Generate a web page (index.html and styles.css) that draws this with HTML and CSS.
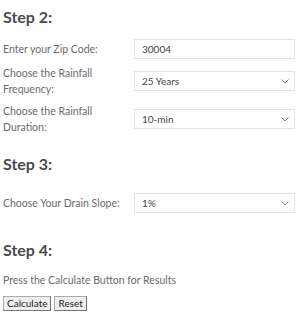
FILE: index.html
```html
<!DOCTYPE html>
<html lang="en">
<head>
    <meta charset="UTF-8">
    <meta name="viewport" content="width=device-width, initial-scale=1.0">
    <title>Drain Calculator</title>
    <link rel="stylesheet" href="styles.css">
</head>
<body>
    <h2 class="step">Step 2:</h2>
    <div class="form-rows">
        <div class="row">
            <label for="zip">Enter your Zip Code:</label>
            <input type="text" id="zip" class="field" value="30004">
        </div>
        <div class="row">
            <label for="frequency">Choose the Rainfall Frequency:</label>
            <div class="select-wrap">
                <select id="frequency" class="field">
                    <option>25 Years</option>
                </select>
                <svg class="chevron" width="8" height="5" viewBox="0 0 8 5"><path d="M0.5 0.5 L4 4 L7.5 0.5" fill="none" stroke="#888" stroke-width="1"/></svg>
            </div>
        </div>
        <div class="row">
            <label for="duration">Choose the Rainfall Duration:</label>
            <div class="select-wrap">
                <select id="duration" class="field">
                    <option>10-min</option>
                </select>
                <svg class="chevron" width="8" height="5" viewBox="0 0 8 5"><path d="M0.5 0.5 L4 4 L7.5 0.5" fill="none" stroke="#888" stroke-width="1"/></svg>
            </div>
        </div>
    </div>

    <h2 class="step step-wide">Step 3:</h2>
    <div class="form-rows form-rows-wide">
        <div class="row">
            <label for="slope">Choose Your Drain Slope:</label>
            <div class="select-wrap">
                <select id="slope" class="field">
                    <option>1%</option>
                </select>
                <svg class="chevron" width="8" height="5" viewBox="0 0 8 5"><path d="M0.5 0.5 L4 4 L7.5 0.5" fill="none" stroke="#888" stroke-width="1"/></svg>
            </div>
        </div>
    </div>

    <h2 class="step">Step 4:</h2>
    <p class="hint">Press the Calculate Button for Results</p>
    <div class="buttons">
        <button type="button">Calculate</button>
        <button type="button">Reset</button>
    </div>
</body>
</html>
```

FILE: styles.css
```css
body {
    font-family: Lato, "Open Sans", sans-serif;
    font-size: 10.5px;
    color: #6b6b6b;
    margin: 0;
    padding: 0 3px;
    background: #fff;
}
.step {
    font-size: 16px;
    font-weight: bold;
    color: #4a4a4a;
    margin: 6px 0 11px;
    line-height: 22px;
}
.step-wide {
    margin-bottom: 18px;
}
.form-rows {
    display: flex;
    flex-direction: column;
    gap: 6px;
    margin-bottom: 18px;
}
.form-rows-wide {
    margin-bottom: 26px;
}
.row {
    display: grid;
    grid-template-columns: 131px 161px;
    align-items: center;
}
label {
    line-height: 16px;
    padding-right: 12px;
}
.select-wrap {
    position: relative;
}
.field {
    box-sizing: border-box;
    width: 161px;
    height: 20px;
    border: 1px solid #e4e4e4;
    background: #fff;
    font-family: inherit;
    font-size: 10px;
    color: #444;
    padding: 0 7px;
    margin: 0;
    appearance: none;
    -webkit-appearance: none;
    border-radius: 0;
    outline: none;
}
.chevron {
    position: absolute;
    right: 6px;
    top: 8px;
    pointer-events: none;
}
.hint {
    margin: 0 0 8px;
    line-height: 16px;
}
.buttons {
    display: flex;
    gap: 3px;
}
button {
    font-family: inherit;
    font-size: 10px;
    color: #222;
    background: #efefef;
    border: 1px solid #aaa;
    border-right-color: #777;
    border-bottom-color: #777;
    padding: 1px 3px;
    line-height: 11px;
    border-radius: 0;
}
```
